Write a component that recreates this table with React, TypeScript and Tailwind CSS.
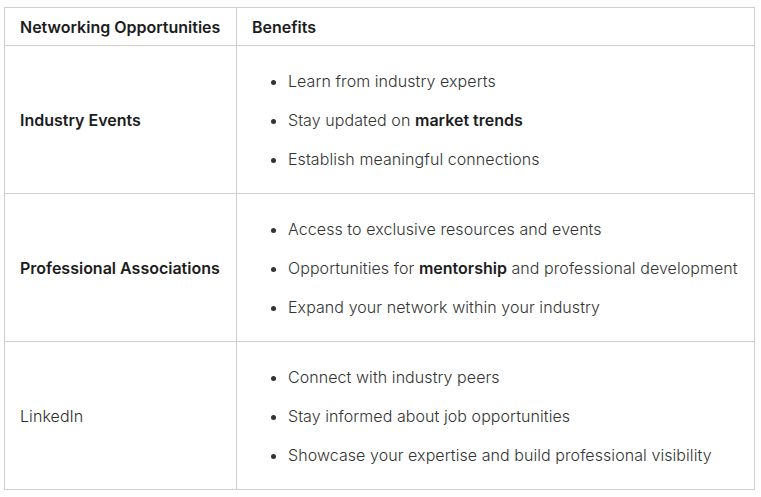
import React from "react";

type Row = {
  title: string;
  bold: boolean;
  items: React.ReactNode[];
};

const rows: Row[] = [
  {
    title: "Industry Events",
    bold: true,
    items: [
      "Learn from industry experts",
      <>
        Stay updated on <strong className="font-semibold text-[#1c1c1c] tracking-normal">market trends</strong>
      </>,
      "Establish meaningful connections",
    ],
  },
  {
    title: "Professional Associations",
    bold: true,
    items: [
      "Access to exclusive resources and events",
      <>
        Opportunities for <strong className="font-semibold text-[#1c1c1c] tracking-normal">mentorship</strong> and professional development
      </>,
      "Expand your network within your industry",
    ],
  },
  {
    title: "LinkedIn",
    bold: false,
    items: [
      "Connect with industry peers",
      "Stay informed about job opportunities",
      "Showcase your expertise and build professional visibility",
    ],
  },
];

export default function App() {
  return (
    <div className="bg-white w-[761px] h-[497px] pt-[7px] pl-[4px] font-['Inter',sans-serif] text-[16px]">
      <table className="border-collapse border border-[#cfcfcf] w-[751px] table-fixed">
        <colgroup>
          <col className="w-[232px]" />
          <col />
        </colgroup>
        <thead>
          <tr className="h-[38px]">
            <th className="border border-[#cfcfcf] text-left font-semibold text-[#1c1c1c] px-[15px] py-0 leading-6">
              Networking Opportunities
            </th>
            <th className="border border-[#cfcfcf] text-left font-semibold text-[#1c1c1c] px-[15px] py-0 leading-6">
              Benefits
            </th>
          </tr>
        </thead>
        <tbody>
          {rows.map((row) => (
            <tr key={row.title} className="h-[148px]">
              <td
                className={
                  row.bold
                    ? "border border-[#cfcfcf] px-[15px] font-semibold text-[#1c1c1c] leading-6 align-middle"
                    : "border border-[#cfcfcf] px-[15px] font-light tracking-[0.07px] text-[#2e2e2e] leading-6 align-middle"
                }
              >
                {row.title}
              </td>
              <td className="border border-[#cfcfcf] pl-[15px] pr-0 py-0 align-middle">
                <ul className="list-disc pl-[36px] flex flex-col gap-[15px] font-light tracking-[0.07px] text-[#333333] leading-6 whitespace-nowrap">
                  {row.items.map((item, i) => (
                    <li key={i}>{item}</li>
                  ))}
                </ul>
              </td>
            </tr>
          ))}
        </tbody>
      </table>
    </div>
  );
}
